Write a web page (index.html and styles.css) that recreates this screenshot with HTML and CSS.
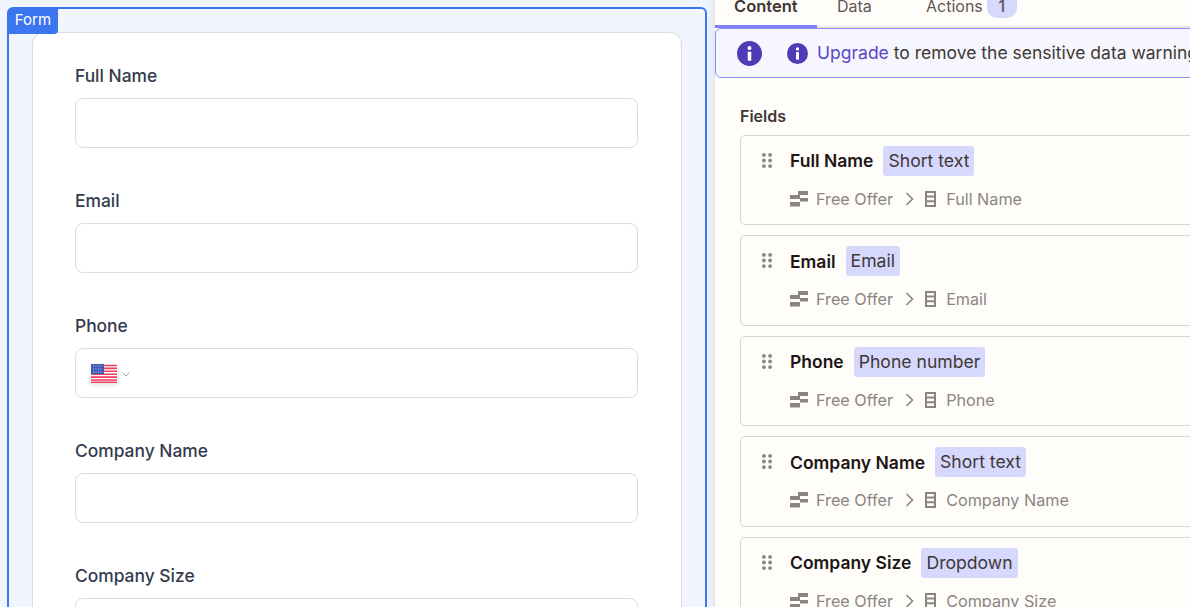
FILE: index.html
```html
<!DOCTYPE html>
<html>

<head>
    <title>Form editor</title>
    <link rel="stylesheet" href="styles.css">
</head>

<body>
    <svg class="defs">
        <symbol id="i-info" viewBox="0 0 24 24">
            <circle cx="12" cy="12" r="12" fill="#4f3bb5"></circle>
            <circle cx="12" cy="6.8" r="1.9" fill="#fff"></circle>
            <rect x="10.3" y="10.2" width="3.4" height="8.8" rx="0.6" fill="#fff"></rect>
        </symbol>
        <symbol id="i-grip" viewBox="0 0 10 15">
            <circle cx="1.9" cy="1.9" r="1.9"></circle>
            <circle cx="8.1" cy="1.9" r="1.9"></circle>
            <circle cx="1.9" cy="7.5" r="1.9"></circle>
            <circle cx="8.1" cy="7.5" r="1.9"></circle>
            <circle cx="1.9" cy="13.1" r="1.9"></circle>
            <circle cx="8.1" cy="13.1" r="1.9"></circle>
        </symbol>
        <symbol id="i-app" viewBox="0 0 18 16">
            <rect x="8" y="0" width="10" height="4"></rect>
            <rect x="0" y="4" width="10" height="4"></rect>
            <rect x="10" y="7" width="8" height="3.5"></rect>
            <rect x="0" y="11" width="10" height="4.5"></rect>
        </symbol>
        <symbol id="i-table" viewBox="0 0 11 16">
            <path d="M1 1h9v14H1zM1 5.6h9M1 10.3h9" fill="none" stroke="currentColor" stroke-width="2"></path>
        </symbol>
        <symbol id="i-next" viewBox="0 0 9 14">
            <path d="M1.5 1l6 6-6 6" fill="none" stroke="currentColor" stroke-width="1.6"></path>
        </symbol>
    </svg>

    <div class="page">
        <div class="left">
            <div class="form-box">
                <span class="form-tag">Form</span>
                <div class="form-card">
                    <div class="field">
                        <label>Full Name</label>
                        <div class="input"></div>
                    </div>
                    <div class="field">
                        <label>Email</label>
                        <div class="input"></div>
                    </div>
                    <div class="field">
                        <label>Phone</label>
                        <div class="input">
                            <svg class="flag" viewBox="0 0 26 19">
                                <rect width="26" height="19" fill="#fff"></rect>
                                <path d="M0 1.5h26M0 4.4h26M0 7.3h26M0 10.2h26M0 13.1h26M0 16h26M0 18.4h26" stroke="#ee3e5c" stroke-width="1.6"></path>
                                <rect width="13" height="10" fill="#3f5cb4"></rect>
                                <path d="M2 2h9M2 5h9M2 8h9" stroke="#b9c6ea" stroke-width="1" stroke-dasharray="1 1.5"></path>
                            </svg>
                            <svg class="caret" viewBox="0 0 8 5">
                                <path d="M0.7 0.7L4 4l3.3-3.3" fill="none" stroke="#9ca3af" stroke-width="1"></path>
                            </svg>
                        </div>
                    </div>
                    <div class="field">
                        <label>Company Name</label>
                        <div class="input"></div>
                    </div>
                    <div class="field">
                        <label>Company Size</label>
                        <div class="input"></div>
                    </div>
                </div>
            </div>
        </div>

        <div class="right">
            <div class="tabs">
                <span class="tab tab-active">Content</span>
                <span class="tab tab-data">Data</span>
                <span class="tab tab-actions">Actions <span class="count">1</span></span>
            </div>

            <div class="notice">
                <svg class="info-big"><use href="#i-info"></use></svg>
                <svg class="info-small"><use href="#i-info"></use></svg>
                <span class="notice-text"><a class="upgrade">Upgrade</a> to remove the sensitive data warning</span>
            </div>

            <div class="fields">
                <div class="fields-title">Fields</div>

                <div class="row">
                    <svg class="grip"><use href="#i-grip"></use></svg>
                    <div class="row-body">
                        <div class="row-top"><b>Full Name</b><span class="type">Short text</span></div>
                        <div class="row-path">
                            <svg class="app"><use href="#i-app"></use></svg><span>Free Offer</span>
                            <svg class="next"><use href="#i-next"></use></svg>
                            <svg class="table"><use href="#i-table"></use></svg><span>Full Name</span>
                        </div>
                    </div>
                </div>

                <div class="row">
                    <svg class="grip"><use href="#i-grip"></use></svg>
                    <div class="row-body">
                        <div class="row-top"><b>Email</b><span class="type">Email</span></div>
                        <div class="row-path">
                            <svg class="app"><use href="#i-app"></use></svg><span>Free Offer</span>
                            <svg class="next"><use href="#i-next"></use></svg>
                            <svg class="table"><use href="#i-table"></use></svg><span>Email</span>
                        </div>
                    </div>
                </div>

                <div class="row">
                    <svg class="grip"><use href="#i-grip"></use></svg>
                    <div class="row-body">
                        <div class="row-top"><b>Phone</b><span class="type">Phone number</span></div>
                        <div class="row-path">
                            <svg class="app"><use href="#i-app"></use></svg><span>Free Offer</span>
                            <svg class="next"><use href="#i-next"></use></svg>
                            <svg class="table"><use href="#i-table"></use></svg><span>Phone</span>
                        </div>
                    </div>
                </div>

                <div class="row">
                    <svg class="grip"><use href="#i-grip"></use></svg>
                    <div class="row-body">
                        <div class="row-top"><b>Company Name</b><span class="type">Short text</span></div>
                        <div class="row-path">
                            <svg class="app"><use href="#i-app"></use></svg><span>Free Offer</span>
                            <svg class="next"><use href="#i-next"></use></svg>
                            <svg class="table"><use href="#i-table"></use></svg><span>Company Name</span>
                        </div>
                    </div>
                </div>

                <div class="row">
                    <svg class="grip"><use href="#i-grip"></use></svg>
                    <div class="row-body">
                        <div class="row-top"><b>Company Size</b><span class="type">Dropdown</span></div>
                        <div class="row-path">
                            <svg class="app"><use href="#i-app"></use></svg><span>Free Offer</span>
                            <svg class="next"><use href="#i-next"></use></svg>
                            <svg class="table"><use href="#i-table"></use></svg><span>Company Size</span>
                        </div>
                    </div>
                </div>
            </div>
        </div>
    </div>
</body>

</html>
```

FILE: styles.css
```css
html, body {
    margin: 0;
    height: 100%;
    overflow: hidden;
}

body {
    font-family: Inter, "Liberation Sans", sans-serif;
    background-color: #f0f4fe;
}

.defs {
    display: none;
}

.page {
    display: flex;
    height: 607px;
    overflow: hidden;
}

/* left: form preview */
.left {
    width: 715px;
    height: 607px;
    overflow: hidden;
    flex-shrink: 0;
    padding: 7px 7px 0 7px;
    box-sizing: border-box;
    background: linear-gradient(to right, #f0f4fe 99%, #e7ebf5);
    border-right: 1px solid #e6e6e6;
}

.form-box {
    position: relative;
    height: 640px;
    box-sizing: border-box;
    border: 2px solid #3b76ef;
    border-radius: 6px;
    background-color: #f0f5fe;
    padding: 23px 23px 0 23px;
}

.form-tag {
    position: absolute;
    top: -1px;
    left: -1px;
    width: 50px;
    height: 26px;
    line-height: 24px;
    text-align: center;
    font-size: 15px;
    color: #fff;
    background-color: #3b76ef;
    border-radius: 5px 0 4px 0;
}

.form-card {
    height: 640px;
    box-sizing: border-box;
    background-color: #fff;
    border: 1px solid #dadbe0;
    border-radius: 12px;
    padding: 31px 43px 0 42px;
}

.field {
    height: 125px;
}

.field label {
    display: block;
    font-size: 17.4px;
    font-weight: 450;
    line-height: 24px;
    color: #343b4e;
    margin-bottom: 10px;
}

.input {
    display: flex;
    align-items: center;
    height: 50px;
    box-sizing: border-box;
    border: 1px solid #dcdcdc;
    border-radius: 8px;
    padding-left: 15px;
}

.flag {
    width: 26px;
    height: 19px;
    box-shadow: 0 2px 4px rgba(0, 0, 0, 0.12);
}

.caret {
    width: 8px;
    height: 5px;
    margin-left: 5px;
    margin-top: 2px;
}

/* right: editor panel */
.right {
    flex: 1;
    min-width: 0;
    height: 607px;
    overflow: hidden;
    background-color: #fffdf9;
    color: #413735;
}

.tabs {
    display: flex;
    align-items: flex-end;
    height: 26px;
    border-bottom: 2px solid #e8e6df;
    font-size: 16px;
    color: #5f5755;
}

.tab {
    height: 26px;
    line-height: 12px;
    box-sizing: border-box;
    white-space: nowrap;
}

.tab-active {
    width: 102px;
    padding-left: 19px;
    font-size: 16.5px;
    font-weight: 600;
    color: #413735;
    height: 28px;
    margin-bottom: -2px;
    border-bottom: 3px solid #8080fa;
}

.tab-data {
    width: 109px;
    padding-left: 20px;
}

.tab-actions {
    display: flex;
    gap: 4px;
}

.count {
    display: inline-block;
    width: 30px;
    height: 18px;
    line-height: 12px;
    text-align: center;
    background-color: #d6d8fd;
    border-radius: 0 0 10px 10px;
    font-weight: 500;
}

.notice {
    display: flex;
    align-items: center;
    height: 50px;
    box-sizing: border-box;
    width: 520px;
    background-color: #f6f6fe;
    border: 1px solid #8c8df6;
    border-radius: 6px;
    padding-left: 21px;
}

.info-big {
    width: 25px;
    height: 25px;
}

.info-small {
    width: 21px;
    height: 21px;
    margin-left: 25px;
}

.notice-text {
    margin-left: 9px;
    font-size: 17.5px;
    line-height: 20px;
    margin-top: -1px;
    white-space: nowrap;
}

.upgrade {
    color: #5b45c4;
}

.fields {
    padding: 29px 0 0 25px;
    width: 520px;
}

.fields-title {
    font-size: 16px;
    font-weight: 600;
    line-height: 18px;
    margin-bottom: 9.9px;
}

.row {
    display: flex;
    height: 90.5px;
    box-sizing: border-box;
    border: 1px solid #d8d5c9;
    border-radius: 5px;
    margin-bottom: 10px;
    padding: 10px 0 0 21px;
}

.grip {
    width: 10px;
    height: 15px;
    margin-top: 7px;
    fill: #8a8583;
}

.row-body {
    margin-left: 18px;
}

.row-top {
    display: flex;
    align-items: center;
    height: 30px;
    font-size: 17.5px;
}

.row-top b {
    font-weight: 600;
    color: #201515;
}

.type {
    margin-left: 10px;
    padding: 0 5px;
    font-size: 17.6px;
    line-height: 30px;
    background-color: #d6d8fd;
    border-radius: 3px;
    color: #413735;
}

.row-path {
    display: flex;
    align-items: center;
    margin-top: 13px;
    height: 20px;
    font-size: 16.2px;
    color: #8a8583;
}

.app {
    width: 18px;
    height: 16px;
    margin-right: 8px;
    fill: #8a8583;
}

.next {
    width: 9px;
    height: 14px;
    margin: 0 11px 0 12px;
}

.table {
    width: 11px;
    height: 16px;
    margin-right: 10px;
}
```
